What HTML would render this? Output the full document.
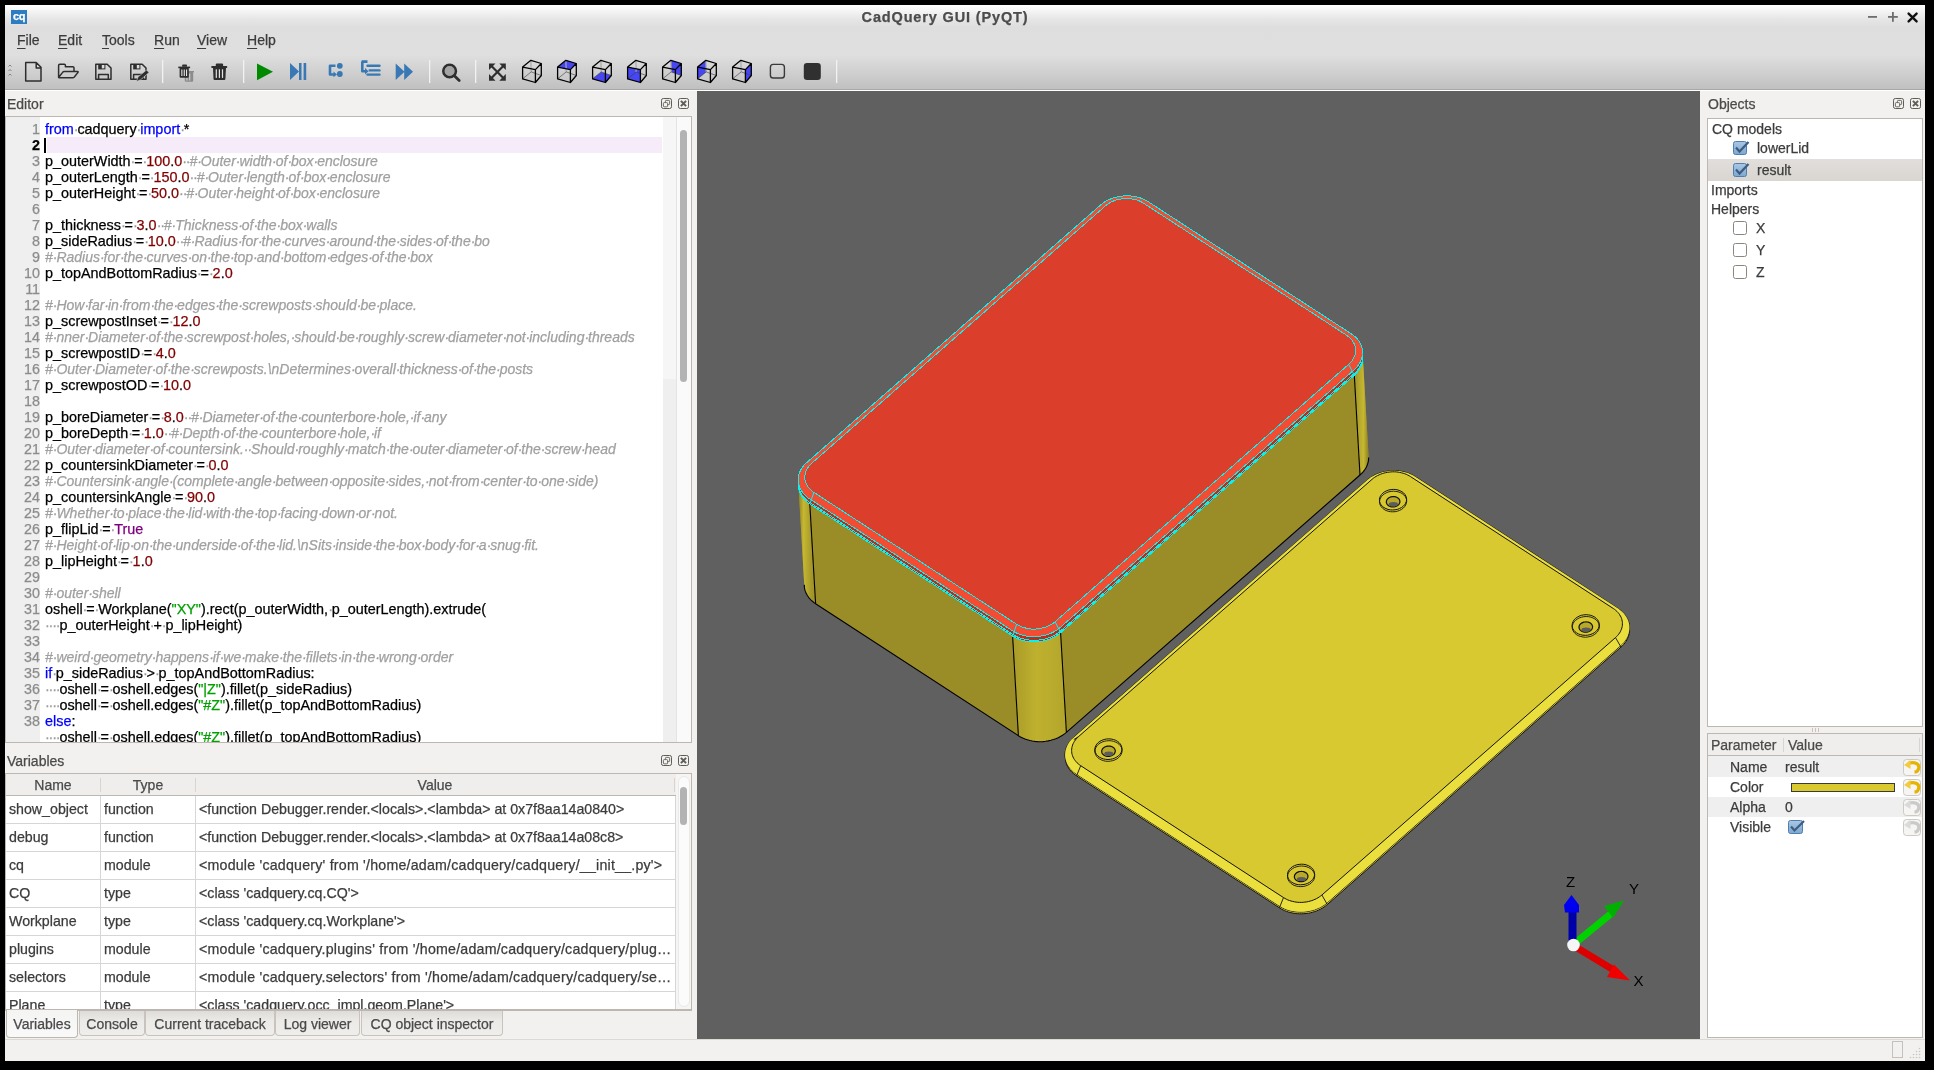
<!DOCTYPE html>
<html><head><meta charset="utf-8">
<style>
*{margin:0;padding:0;box-sizing:border-box}
html,body{width:1934px;height:1070px;overflow:hidden;background:#000}
body{position:relative;will-change:transform;-webkit-text-stroke:0.25px currentColor;font-family:"Liberation Sans",sans-serif;font-size:14px;color:#3c3c3c}
.a{position:absolute}
.t{position:absolute;white-space:pre;line-height:16px}
#win{position:absolute;left:5px;top:5px;width:1920px;height:1056px;background:#f0efed;overflow:hidden}
#hdr{position:absolute;left:0;top:0;width:1920px;height:85px;
 background:linear-gradient(#ffffff 0px,#e6e6e6 14px,#dedede 22px,#dfdfdf 50px,#cdcdcd 70px,#c0c0c0 84px)}
.menu{position:absolute;top:32px;font-size:14px;color:#3c3c3c;line-height:16px}
.menu u{text-decoration:underline;text-underline-offset:2.5px;text-decoration-thickness:1px}
.sep{position:absolute;top:55px;width:1px;height:23px;background:#f4f4f4;border-left:1px solid #c4c4c4}
.ico{position:absolute;top:53px}
.dtitle{position:absolute;font-size:14px;color:#4a4a4a;line-height:16px}
.dbtn{position:absolute;width:11px;height:11px;border:1px solid #6e6e6e;border-radius:2px}
.ln{position:absolute;left:5px;width:34px;text-align:right;white-space:pre;font-size:14.3px;line-height:16px;color:#8c8c8c}
.ln.cur{color:#000;font-weight:bold}
.code{position:absolute;left:44px;white-space:pre;font-size:14.4px;line-height:16px;color:#000}
.code .k{color:#0000ff}.code .d{color:#800000}.code .dt{color:#000;font-weight:normal}.code .s{color:#00a000}.code .p{color:#800080}
.code .c{color:#a0a0a0;font-style:italic;font-size:14px}
.code b.w{font-weight:normal;color:#9a9a9a;display:inline-block;width:3.6px;text-align:center;overflow:visible}
.hd{position:absolute;top:3px;text-align:center;font-size:14px;line-height:16px;color:#4a4a4a}
.vr{position:absolute;white-space:pre;font-size:14.2px;line-height:26px;height:27px;color:#3c3c3c}
.tab{position:absolute;text-align:center;font-size:14px;line-height:27px;color:#4a4a4a;border:1px solid #c8c4bd;border-top:none;border-radius:0 0 4px 4px;background:linear-gradient(#dedcd8,#eceae7 40%,#efeeec)}
.tab.act{background:linear-gradient(#f4f4f3,#f9f9f9);line-height:28px;border-color:#bcb8b1}
.tr{position:absolute;white-space:pre;font-size:14px;line-height:16px;color:#3c3c3c}
</style></head><body>
<div class="a" style="left:5px;top:5px;width:1920px;height:1056px;background:#f2f1ef"></div>
<div class="a" id="hdr" style="left:5px;top:5px;width:1920px;height:84px;background:linear-gradient(#ffffff 0px,#e6e6e6 14px,#dedede 22px,#dfdfdf 50px,#cdcdcd 70px,#c0c0c0 84px)"></div>
<div class="a" style="left:11px;top:10px;width:16px;height:14px;background:#2d7dc0;color:#fff;font-weight:bold;font-size:11px;line-height:12px;text-align:center;letter-spacing:-0.3px">cq</div>
<div class="a" style="left:5px;top:8px;width:1880px;text-align:center;font-weight:bold;font-size:14.5px;letter-spacing:0.85px;color:#4c4c4c;line-height:18px">CadQuery GUI (PyQT)</div>
<svg class="a" style="left:1860px;top:8px" width="64" height="20" viewBox="1860 8 64 20">
<rect x="1868" y="16" width="9" height="1.8" fill="#6e6e6e"/><rect x="1888" y="16" width="9.8" height="1.8" fill="#6e6e6e"/><rect x="1892" y="12" width="1.8" height="9.8" fill="#6e6e6e"/>
<path d="M1908.6,13.6 L1916.6,21.4 M1916.6,13.6 L1908.6,21.4" stroke="#111" stroke-width="2.4" stroke-linecap="round"/>
</svg>
<div class="menu" style="left:17px"><u>F</u>ile</div>
<div class="menu" style="left:58px"><u>E</u>dit</div>
<div class="menu" style="left:102px"><u>T</u>ools</div>
<div class="menu" style="left:154px"><u>R</u>un</div>
<div class="menu" style="left:197px"><u>V</u>iew</div>
<div class="menu" style="left:247px"><u>H</u>elp</div>
<svg class="a" style="left:0;top:0" width="1934" height="100" viewBox="0 0 1934 100">
<g fill="none" stroke="#7a7a7a" stroke-width="0.9"><path d="M8.5,66.5 L10,65 L11.5,66.5 M8.5,71 L10,69.5 L11.5,71 M8.5,75.5 L10,74 L11.5,75.5"/></g>
<g fill="none" stroke="#2e2e2e" stroke-width="1.5" stroke-linejoin="round">
<path d="M25.7,62.5 H36.2 L41,67.3 V81 H25.7 Z M36.2,62.5 V68 H41"/>
<path d="M58.6,77.5 V65.4 Q58.6,64.2 59.8,64.2 H64.3 Q65.4,64.2 65.4,65.3 V66.7 H72.8 Q74,66.7 74,67.9 V71.2 M58.6,77.5 L62.6,72.4 Q63.2,71.5 64.3,71.5 H77.6 Q78.5,71.5 78,72.4 L74.3,77 Q73.6,77.8 72.6,77.8 H59.5 Q58.6,77.8 58.6,77.5"/>
<path d="M95.8,64.2 H107.2 L111,68.1 V79.3 H95.8 Z M98.6,79.3 V74.5 H108.3 V79.3"/>
<path d="M130.8,64.2 H142.2 L146,68.1 V79.3 H130.8 Z M133.6,79.3 V74.5 H143.3 V79.3"/>
</g>
<rect x="98.2" y="64" width="7.2" height="5.4" fill="#2e2e2e"/><rect x="101.8" y="65" width="2.6" height="3.4" fill="#dcdcdc"/>
<rect x="133.2" y="64" width="7.2" height="5.4" fill="#2e2e2e"/><rect x="136.8" y="65" width="2.6" height="3.4" fill="#dcdcdc"/>
<path d="M136.5,81.5 L138,77 L146.5,70 L149,72.5 L140.5,79.8 Z" fill="#2e2e2e" stroke="#d0d0d0" stroke-width="0.6"/>
<rect x="162" y="60" width="1.3" height="23" fill="#f2f2f2"/>
<!-- small trash + ghost -->
<g fill="#8c8c8c"><rect x="184" y="71" width="10" height="1.5"/><rect x="184.8" y="72" width="8.4" height="9.7" rx="1"/></g>
<rect x="186.3" y="73.5" width="1.3" height="7" fill="#c8c8c8"/><rect x="189" y="73.5" width="1.3" height="7" fill="#c8c8c8"/>
<g fill="#2e2e2e"><rect x="178.3" y="66.6" width="11.8" height="1.6"/><path d="M182.2,66.8 V65.3 Q182.2,64.6 183,64.6 H186.2 Q187,64.6 187,65.3 V66.8 Z"/><rect x="179.6" y="67.8" width="9.2" height="10" rx="1"/></g>
<g fill="#e8e8e8"><rect x="181.3" y="69.5" width="1.1" height="6.5"/><rect x="183.7" y="69.5" width="1.1" height="6.5"/><rect x="186" y="69.5" width="1.1" height="6.5"/></g>
<!-- trash -->
<g fill="#2e2e2e"><rect x="211.3" y="66" width="15.9" height="1.9" rx="0.6"/><path d="M215.8,66.2 V64.4 Q215.8,63.4 216.8,63.4 H222.1 Q223.1,63.4 223.1,64.4 V66.2 Z"/><path d="M213,67.6 H226 L225.4,79 Q225.3,80 224.3,80 H214.6 Q213.6,80 213.5,79 Z"/></g>
<g fill="#e4e4e4"><rect x="215.7" y="69.3" width="1.2" height="8.6"/><rect x="218.8" y="69.3" width="1.2" height="8.6"/><rect x="221.9" y="69.3" width="1.2" height="8.6"/></g>
<rect x="243" y="60" width="1.3" height="23" fill="#f2f2f2"/>
<!-- run -->
<path d="M257,63.4 L273,71.8 L257,80.2 Z" fill="#008a00"/>
<path d="M290,63 L299,71.5 L290,80 Z" fill="#3878b4"/><rect x="299" y="63" width="2.5" height="17" fill="#3878b4"/><rect x="303.6" y="63" width="2.6" height="17" fill="#3878b4"/>
<g stroke="#3878b4" stroke-width="2.6" fill="none" stroke-linejoin="round"><path d="M335.5,65.8 H330 V74.5 H334"/><path d="M361.6,61.6 H367.5 M362.3,61.6 V71.2 H365.5"/></g>
<path d="M333.5,71.6 L337,74.5 L333.5,77.3 Z" fill="#3878b4"/><circle cx="339.8" cy="65.8" r="2.9" fill="#3878b4"/><circle cx="339.8" cy="74" r="2.9" fill="#3878b4"/>
<path d="M365,68 L368.5,71.2 L365,74.4 Z" fill="#3878b4"/>
<g stroke="#3878b4" stroke-width="2.4" stroke-linecap="round"><path d="M367.5,65.8 H379.5 M369.7,70.4 H379.5 M367.5,74.6 H379.5"/></g>
<path d="M395.7,63.4 L404.5,71.7 L395.7,80 Z M404.2,63.4 L413,71.7 L404.2,80 Z" fill="#3878b4"/>
<rect x="429" y="60" width="1.3" height="23" fill="#f2f2f2"/>
<!-- magnifier -->
<circle cx="449.6" cy="71" r="5" fill="#a4a4a4"/>
<circle cx="449.6" cy="71" r="6.3" fill="none" stroke="#2e2e2e" stroke-width="2.6"/>
<path d="M454.6,76 L459.2,80.6" stroke="#2e2e2e" stroke-width="2.8" stroke-linecap="round"/>
<rect x="475" y="60" width="1.3" height="23" fill="#f2f2f2"/>
<!-- fit -->
<g stroke="#2e2e2e" stroke-width="2.2"><path d="M491,65.5 L503.8,78.5 M503.8,65.5 L491,78.5"/></g>
<g fill="#2e2e2e"><path d="M489,63.4 H495.5 L489,70 Z"/><path d="M505.8,63.4 H499.3 L505.8,70 Z"/><path d="M489,80.7 H495.5 L489,74 Z"/><path d="M505.8,80.7 H499.3 L505.8,74 Z"/></g>
<path d="M530.9,60.3 L531.2,71.9" stroke="#a8a8a8" stroke-width="1.2" fill="none"/><path d="M522.6,78.8 L531.2,71.9 L541.3,75.5" stroke="#3a3a3a" stroke-width="0.6" fill="none"/><path d="M530.9,60.3 L522.6,67.1 L535.4,69.6 L541.3,63.5 Z M522.6,67.1 L522.6,78.8 L535.4,82.5 L541.3,75.5 L541.3,63.5 M535.4,69.6 L535.4,82.5" stroke="#000" stroke-width="1.3" fill="none" stroke-linejoin="round"/>
<polygon points="565.9,60.3 576.3,63.5 570.4,69.6 557.6,67.1" fill="#4646f2"/><path d="M565.9,60.3 L566.2,71.9" stroke="#a8a8a8" stroke-width="1.2" fill="none"/><path d="M557.6,78.8 L566.2,71.9 L576.3,75.5" stroke="#3a3a3a" stroke-width="0.6" fill="none"/><path d="M565.9,60.3 L557.6,67.1 L570.4,69.6 L576.3,63.5 Z M557.6,67.1 L557.6,78.8 L570.4,82.5 L576.3,75.5 L576.3,63.5 M570.4,69.6 L570.4,82.5" stroke="#000" stroke-width="1.3" fill="none" stroke-linejoin="round"/>
<polygon points="601.2,71.9 611.3,75.5 605.4,82.5 592.6,78.8" fill="#4646f2"/><path d="M600.9,60.3 L601.2,71.9" stroke="#a8a8a8" stroke-width="1.2" fill="none"/><path d="M592.6,78.8 L601.2,71.9 L611.3,75.5" stroke="#3a3a3a" stroke-width="0.6" fill="none"/><path d="M600.9,60.3 L592.6,67.1 L605.4,69.6 L611.3,63.5 Z M592.6,67.1 L592.6,78.8 L605.4,82.5 L611.3,75.5 L611.3,63.5 M605.4,69.6 L605.4,82.5" stroke="#000" stroke-width="1.3" fill="none" stroke-linejoin="round"/>
<polygon points="627.6,67.1 640.4,69.6 640.4,82.5 627.6,78.8" fill="#4646f2"/><path d="M635.9,60.3 L636.2,71.9" stroke="#a8a8a8" stroke-width="1.2" fill="none"/><path d="M627.6,78.8 L636.2,71.9 L646.3,75.5" stroke="#3a3a3a" stroke-width="0.6" fill="none"/><path d="M635.9,60.3 L627.6,67.1 L640.4,69.6 L646.3,63.5 Z M627.6,67.1 L627.6,78.8 L640.4,82.5 L646.3,75.5 L646.3,63.5 M640.4,69.6 L640.4,82.5" stroke="#000" stroke-width="1.3" fill="none" stroke-linejoin="round"/>
<polygon points="670.9,60.3 681.3,63.5 681.3,75.5 671.2,71.9" fill="#4646f2"/><path d="M670.9,60.3 L671.2,71.9" stroke="#a8a8a8" stroke-width="1.2" fill="none"/><path d="M662.6,78.8 L671.2,71.9 L681.3,75.5" stroke="#3a3a3a" stroke-width="0.6" fill="none"/><path d="M670.9,60.3 L662.6,67.1 L675.4,69.6 L681.3,63.5 Z M662.6,67.1 L662.6,78.8 L675.4,82.5 L681.3,75.5 L681.3,63.5 M675.4,69.6 L675.4,82.5" stroke="#000" stroke-width="1.3" fill="none" stroke-linejoin="round"/>
<polygon points="705.9,60.3 697.6,67.1 697.6,78.8 706.2,71.9" fill="#4646f2"/><path d="M705.9,60.3 L706.2,71.9" stroke="#a8a8a8" stroke-width="1.2" fill="none"/><path d="M697.6,78.8 L706.2,71.9 L716.3,75.5" stroke="#3a3a3a" stroke-width="0.6" fill="none"/><path d="M705.9,60.3 L697.6,67.1 L710.4,69.6 L716.3,63.5 Z M697.6,67.1 L697.6,78.8 L710.4,82.5 L716.3,75.5 L716.3,63.5 M710.4,69.6 L710.4,82.5" stroke="#000" stroke-width="1.3" fill="none" stroke-linejoin="round"/>
<polygon points="745.4,69.6 751.3,63.5 751.3,75.5 745.4,82.5" fill="#4646f2"/><path d="M740.9,60.3 L741.2,71.9" stroke="#a8a8a8" stroke-width="1.2" fill="none"/><path d="M732.6,78.8 L741.2,71.9 L751.3,75.5" stroke="#3a3a3a" stroke-width="0.6" fill="none"/><path d="M740.9,60.3 L732.6,67.1 L745.4,69.6 L751.3,63.5 Z M732.6,67.1 L732.6,78.8 L745.4,82.5 L751.3,75.5 L751.3,63.5 M745.4,69.6 L745.4,82.5" stroke="#000" stroke-width="1.3" fill="none" stroke-linejoin="round"/>
<rect x="770.4" y="64.4" width="14" height="13.6" rx="2.8" fill="none" stroke="#3a3a3a" stroke-width="1.4"/>
<rect x="803.8" y="62.9" width="17" height="17.1" rx="3.2" fill="#303030"/>
<rect x="836" y="60" width="1.3" height="23" fill="#f2f2f2"/>
</svg>

<div class="a" style="left:5px;top:89px;width:1920px;height:1px;background:#a8a8a8"></div>
<div class="a" style="left:5px;top:90px;width:1920px;height:1px;background:#ffffff"></div>
<!-- editor dock -->
<div class="dtitle" style="left:7px;top:96px">Editor</div>
<svg class="a" style="left:655px;top:92px" width="40" height="20" viewBox="655 92 40 20"><rect x="661.5" y="98.5" width="10" height="10" rx="1.8" fill="none" stroke="#5f5d58" stroke-width="1"/><rect x="665.4" y="100.4" width="4.2" height="4.2" rx="0.8" fill="none" stroke="#5f5d58" stroke-width="0.9"/><rect x="663.4" y="102.6" width="4.2" height="4.2" rx="0.8" fill="#f6f5f3" stroke="#5f5d58" stroke-width="0.9"/><rect x="678.5" y="98.5" width="10" height="10" rx="1.8" fill="none" stroke="#5f5d58" stroke-width="1"/><path d="M680.9,100.9 L686.1,106.1 M686.1,100.9 L680.9,106.1" stroke="#5f5d58" stroke-width="2"/></svg>
<div class="a" id="ed" style="left:5px;top:116px;width:687px;height:627px;border:1px solid #bcb8b1;background:#fff;overflow:hidden">
 <div class="a" style="left:0;top:0;width:34px;height:627px;background:#efefef"></div>
 <div class="a" style="left:41px;top:20px;width:615px;height:16px;background:#f6ebf8"></div>
 <div class="a" style="left:38px;top:21px;width:2px;height:15px;background:#000"></div>
 <div class="a" style="left:657px;top:0;width:13px;height:262px;background:#f6f6f6"></div>
 <div class="a" style="left:657px;top:262px;width:13px;height:365px;background:#efefef"></div>
 <div class="a" style="left:670px;top:0;width:1px;height:627px;background:#e4e4e4"></div>
 <div class="a" style="left:671px;top:0;width:14px;height:627px;background:#fafafa"></div>
 <div class="a" style="left:674px;top:13px;width:7px;height:252px;background:#b3b3b3;border-radius:4px"></div>
 <div class="a" style="left:-5px;top:-116px">
<div class="ln" style="top:120px">1</div>
<div class="code" style="top:120px"><span class="k">from</span><b class="w">·</b>cadquery<b class="w">·</b><span class="k">import</span><b class="w">·</b>*</div>
<div class="ln cur" style="top:136px">2</div>
<div class="ln" style="top:152px">3</div>
<div class="code" style="top:152px">p_outerWidth<b class="w">·</b>=<b class="w">·</b><span class="d">100<b class="dt">.</b>0</span><b class="w">·</b><b class="w">·</b><span class="c">#<b class="w">·</b>Outer<b class="w">·</b>width<b class="w">·</b>of<b class="w">·</b>box<b class="w">·</b>enclosure</span></div>
<div class="ln" style="top:168px">4</div>
<div class="code" style="top:168px">p_outerLength<b class="w">·</b>=<b class="w">·</b><span class="d">150<b class="dt">.</b>0</span><b class="w">·</b><b class="w">·</b><span class="c">#<b class="w">·</b>Outer<b class="w">·</b>length<b class="w">·</b>of<b class="w">·</b>box<b class="w">·</b>enclosure</span></div>
<div class="ln" style="top:184px">5</div>
<div class="code" style="top:184px">p_outerHeight<b class="w">·</b>=<b class="w">·</b><span class="d">50<b class="dt">.</b>0</span><b class="w">·</b><b class="w">·</b><span class="c">#<b class="w">·</b>Outer<b class="w">·</b>height<b class="w">·</b>of<b class="w">·</b>box<b class="w">·</b>enclosure</span></div>
<div class="ln" style="top:200px">6</div>
<div class="ln" style="top:216px">7</div>
<div class="code" style="top:216px">p_thickness<b class="w">·</b>=<b class="w">·</b><span class="d">3<b class="dt">.</b>0</span><b class="w">·</b><b class="w">·</b><span class="c">#<b class="w">·</b>Thickness<b class="w">·</b>of<b class="w">·</b>the<b class="w">·</b>box<b class="w">·</b>walls</span></div>
<div class="ln" style="top:232px">8</div>
<div class="code" style="top:232px">p_sideRadius<b class="w">·</b>=<b class="w">·</b><span class="d">10<b class="dt">.</b>0</span><b class="w">·</b><b class="w">·</b><span class="c">#<b class="w">·</b>Radius<b class="w">·</b>for<b class="w">·</b>the<b class="w">·</b>curves<b class="w">·</b>around<b class="w">·</b>the<b class="w">·</b>sides<b class="w">·</b>of<b class="w">·</b>the<b class="w">·</b>bo</span></div>
<div class="ln" style="top:248px">9</div>
<div class="code" style="top:248px"><span class="c">#<b class="w">·</b>Radius<b class="w">·</b>for<b class="w">·</b>the<b class="w">·</b>curves<b class="w">·</b>on<b class="w">·</b>the<b class="w">·</b>top<b class="w">·</b>and<b class="w">·</b>bottom<b class="w">·</b>edges<b class="w">·</b>of<b class="w">·</b>the<b class="w">·</b>box</span></div>
<div class="ln" style="top:264px">10</div>
<div class="code" style="top:264px">p_topAndBottomRadius<b class="w">·</b>=<b class="w">·</b><span class="d">2<b class="dt">.</b>0</span></div>
<div class="ln" style="top:280px">11</div>
<div class="ln" style="top:296px">12</div>
<div class="code" style="top:296px"><span class="c">#<b class="w">·</b>How<b class="w">·</b>far<b class="w">·</b>in<b class="w">·</b>from<b class="w">·</b>the<b class="w">·</b>edges<b class="w">·</b>the<b class="w">·</b>screwposts<b class="w">·</b>should<b class="w">·</b>be<b class="w">·</b>place.</span></div>
<div class="ln" style="top:312px">13</div>
<div class="code" style="top:312px">p_screwpostInset<b class="w">·</b>=<b class="w">·</b><span class="d">12<b class="dt">.</b>0</span></div>
<div class="ln" style="top:328px">14</div>
<div class="code" style="top:328px"><span class="c">#<b class="w">·</b>nner<b class="w">·</b>Diameter<b class="w">·</b>of<b class="w">·</b>the<b class="w">·</b>screwpost<b class="w">·</b>holes,<b class="w">·</b>should<b class="w">·</b>be<b class="w">·</b>roughly<b class="w">·</b>screw<b class="w">·</b>diameter<b class="w">·</b>not<b class="w">·</b>including<b class="w">·</b>threads</span></div>
<div class="ln" style="top:344px">15</div>
<div class="code" style="top:344px">p_screwpostID<b class="w">·</b>=<b class="w">·</b><span class="d">4<b class="dt">.</b>0</span></div>
<div class="ln" style="top:360px">16</div>
<div class="code" style="top:360px"><span class="c">#<b class="w">·</b>Outer<b class="w">·</b>Diameter<b class="w">·</b>of<b class="w">·</b>the<b class="w">·</b>screwposts.\nDetermines<b class="w">·</b>overall<b class="w">·</b>thickness<b class="w">·</b>of<b class="w">·</b>the<b class="w">·</b>posts</span></div>
<div class="ln" style="top:376px">17</div>
<div class="code" style="top:376px">p_screwpostOD<b class="w">·</b>=<b class="w">·</b><span class="d">10<b class="dt">.</b>0</span></div>
<div class="ln" style="top:392px">18</div>
<div class="ln" style="top:408px">19</div>
<div class="code" style="top:408px">p_boreDiameter<b class="w">·</b>=<b class="w">·</b><span class="d">8<b class="dt">.</b>0</span><b class="w">·</b><b class="w">·</b><span class="c">#<b class="w">·</b>Diameter<b class="w">·</b>of<b class="w">·</b>the<b class="w">·</b>counterbore<b class="w">·</b>hole,<b class="w">·</b>if<b class="w">·</b>any</span></div>
<div class="ln" style="top:424px">20</div>
<div class="code" style="top:424px">p_boreDepth<b class="w">·</b>=<b class="w">·</b><span class="d">1<b class="dt">.</b>0</span><b class="w">·</b><b class="w">·</b><span class="c">#<b class="w">·</b>Depth<b class="w">·</b>of<b class="w">·</b>the<b class="w">·</b>counterbore<b class="w">·</b>hole,<b class="w">·</b>if</span></div>
<div class="ln" style="top:440px">21</div>
<div class="code" style="top:440px"><span class="c">#<b class="w">·</b>Outer<b class="w">·</b>diameter<b class="w">·</b>of<b class="w">·</b>countersink.<b class="w">·</b><b class="w">·</b>Should<b class="w">·</b>roughly<b class="w">·</b>match<b class="w">·</b>the<b class="w">·</b>outer<b class="w">·</b>diameter<b class="w">·</b>of<b class="w">·</b>the<b class="w">·</b>screw<b class="w">·</b>head</span></div>
<div class="ln" style="top:456px">22</div>
<div class="code" style="top:456px">p_countersinkDiameter<b class="w">·</b>=<b class="w">·</b><span class="d">0<b class="dt">.</b>0</span></div>
<div class="ln" style="top:472px">23</div>
<div class="code" style="top:472px"><span class="c">#<b class="w">·</b>Countersink<b class="w">·</b>angle<b class="w">·</b>(complete<b class="w">·</b>angle<b class="w">·</b>between<b class="w">·</b>opposite<b class="w">·</b>sides,<b class="w">·</b>not<b class="w">·</b>from<b class="w">·</b>center<b class="w">·</b>to<b class="w">·</b>one<b class="w">·</b>side)</span></div>
<div class="ln" style="top:488px">24</div>
<div class="code" style="top:488px">p_countersinkAngle<b class="w">·</b>=<b class="w">·</b><span class="d">90<b class="dt">.</b>0</span></div>
<div class="ln" style="top:504px">25</div>
<div class="code" style="top:504px"><span class="c">#<b class="w">·</b>Whether<b class="w">·</b>to<b class="w">·</b>place<b class="w">·</b>the<b class="w">·</b>lid<b class="w">·</b>with<b class="w">·</b>the<b class="w">·</b>top<b class="w">·</b>facing<b class="w">·</b>down<b class="w">·</b>or<b class="w">·</b>not.</span></div>
<div class="ln" style="top:520px">26</div>
<div class="code" style="top:520px">p_flipLid<b class="w">·</b>=<b class="w">·</b><span class="p">True</span></div>
<div class="ln" style="top:536px">27</div>
<div class="code" style="top:536px"><span class="c">#<b class="w">·</b>Height<b class="w">·</b>of<b class="w">·</b>lip<b class="w">·</b>on<b class="w">·</b>the<b class="w">·</b>underside<b class="w">·</b>of<b class="w">·</b>the<b class="w">·</b>lid.\nSits<b class="w">·</b>inside<b class="w">·</b>the<b class="w">·</b>box<b class="w">·</b>body<b class="w">·</b>for<b class="w">·</b>a<b class="w">·</b>snug<b class="w">·</b>fit.</span></div>
<div class="ln" style="top:552px">28</div>
<div class="code" style="top:552px">p_lipHeight<b class="w">·</b>=<b class="w">·</b><span class="d">1<b class="dt">.</b>0</span></div>
<div class="ln" style="top:568px">29</div>
<div class="ln" style="top:584px">30</div>
<div class="code" style="top:584px"><span class="c">#<b class="w">·</b>outer<b class="w">·</b>shell</span></div>
<div class="ln" style="top:600px">31</div>
<div class="code" style="top:600px">oshell<b class="w">·</b>=<b class="w">·</b>Workplane(<span class="s">&quot;XY&quot;</span>).rect(p_outerWidth,<b class="w">·</b>p_outerLength).extrude(</div>
<div class="ln" style="top:616px">32</div>
<div class="code" style="top:616px"><b class="w">·</b><b class="w">·</b><b class="w">·</b><b class="w">·</b>p_outerHeight<b class="w">·</b>+<b class="w">·</b>p_lipHeight)</div>
<div class="ln" style="top:632px">33</div>
<div class="ln" style="top:648px">34</div>
<div class="code" style="top:648px"><span class="c">#<b class="w">·</b>weird<b class="w">·</b>geometry<b class="w">·</b>happens<b class="w">·</b>if<b class="w">·</b>we<b class="w">·</b>make<b class="w">·</b>the<b class="w">·</b>fillets<b class="w">·</b>in<b class="w">·</b>the<b class="w">·</b>wrong<b class="w">·</b>order</span></div>
<div class="ln" style="top:664px">35</div>
<div class="code" style="top:664px"><span class="k">if</span><b class="w">·</b>p_sideRadius<b class="w">·</b>&gt;<b class="w">·</b>p_topAndBottomRadius:</div>
<div class="ln" style="top:680px">36</div>
<div class="code" style="top:680px"><b class="w">·</b><b class="w">·</b><b class="w">·</b><b class="w">·</b>oshell<b class="w">·</b>=<b class="w">·</b>oshell.edges(<span class="s">&quot;|Z&quot;</span>).fillet(p_sideRadius)</div>
<div class="ln" style="top:696px">37</div>
<div class="code" style="top:696px"><b class="w">·</b><b class="w">·</b><b class="w">·</b><b class="w">·</b>oshell<b class="w">·</b>=<b class="w">·</b>oshell.edges(<span class="s">&quot;#Z&quot;</span>).fillet(p_topAndBottomRadius)</div>
<div class="ln" style="top:712px">38</div>
<div class="code" style="top:712px"><span class="k">else</span>:</div>

<div class="code" style="top:728px"><b class="w">·</b><b class="w">·</b><b class="w">·</b><b class="w">·</b>oshell<b class="w">·</b>=<b class="w">·</b>oshell.edges(<span class="s">&quot;#Z&quot;</span>).fillet(p_topAndBottomRadius)</div>
 </div>
</div>

<div class="dtitle" style="left:7px;top:753px">Variables</div>
<svg class="a" style="left:655px;top:750px" width="40" height="20" viewBox="655 750 40 20"><rect x="661.5" y="755.5" width="10" height="10" rx="1.8" fill="none" stroke="#5f5d58" stroke-width="1"/><rect x="665.4" y="757.4" width="4.2" height="4.2" rx="0.8" fill="none" stroke="#5f5d58" stroke-width="0.9"/><rect x="663.4" y="759.6" width="4.2" height="4.2" rx="0.8" fill="#f6f5f3" stroke="#5f5d58" stroke-width="0.9"/><rect x="678.5" y="755.5" width="10" height="10" rx="1.8" fill="none" stroke="#5f5d58" stroke-width="1"/><path d="M680.9,757.9 L686.1,763.1 M686.1,757.9 L680.9,763.1" stroke="#5f5d58" stroke-width="2"/></svg>
<div class="a" style="left:5px;top:773px;width:687px;height:237px;border:1px solid #bcb8b1;background:#fff;overflow:hidden">
 <div class="a" style="left:0;top:0;width:670px;height:22px;background:#efeeec;border-bottom:1px solid #bcb8b1"></div>
 <div class="a" style="left:94px;top:4px;width:1px;height:14px;background:#d8d5cf"></div>
 <div class="a" style="left:189px;top:4px;width:1px;height:14px;background:#d8d5cf"></div>
 <div class="a" style="left:668px;top:4px;width:1px;height:14px;background:#d8d5cf"></div>
 <div class="hd" style="left:0;width:94px">Name</div><div class="hd" style="left:95px;width:94px">Type</div><div class="hd" style="left:190px;width:478px">Value</div>
 <div class="a" style="left:0;top:49px;width:670px;height:1px;background:#d6d6d6"></div>
 <div class="vr" style="left:3px;top:22px">show_object</div><div class="vr" style="left:98px;top:22px">function</div><div class="vr" style="left:193px;top:22px">&lt;function Debugger.render.&lt;locals&gt;.&lt;lambda&gt; at 0x7f8aa14a0840&gt;</div>
 <div class="a" style="left:0;top:77px;width:670px;height:1px;background:#d6d6d6"></div>
 <div class="vr" style="left:3px;top:50px">debug</div><div class="vr" style="left:98px;top:50px">function</div><div class="vr" style="left:193px;top:50px">&lt;function Debugger.render.&lt;locals&gt;.&lt;lambda&gt; at 0x7f8aa14a08c8&gt;</div>
 <div class="a" style="left:0;top:105px;width:670px;height:1px;background:#d6d6d6"></div>
 <div class="vr" style="left:3px;top:78px">cq</div><div class="vr" style="left:98px;top:78px">module</div><div class="vr" style="left:193px;top:78px;letter-spacing:0.22px">&lt;module &#x27;cadquery&#x27; from &#x27;/home/adam/cadquery/cadquery/__init__.py&#x27;&gt;</div>
 <div class="a" style="left:0;top:133px;width:670px;height:1px;background:#d6d6d6"></div>
 <div class="vr" style="left:3px;top:106px">CQ</div><div class="vr" style="left:98px;top:106px">type</div><div class="vr" style="left:193px;top:106px">&lt;class &#x27;cadquery.cq.CQ&#x27;&gt;</div>
 <div class="a" style="left:0;top:161px;width:670px;height:1px;background:#d6d6d6"></div>
 <div class="vr" style="left:3px;top:134px">Workplane</div><div class="vr" style="left:98px;top:134px">type</div><div class="vr" style="left:193px;top:134px">&lt;class &#x27;cadquery.cq.Workplane&#x27;&gt;</div>
 <div class="a" style="left:0;top:189px;width:670px;height:1px;background:#d6d6d6"></div>
 <div class="vr" style="left:3px;top:162px">plugins</div><div class="vr" style="left:98px;top:162px">module</div><div class="vr" style="left:193px;top:162px;letter-spacing:0.22px">&lt;module &#x27;cadquery.plugins&#x27; from &#x27;/home/adam/cadquery/cadquery/plug…</div>
 <div class="a" style="left:0;top:217px;width:670px;height:1px;background:#d6d6d6"></div>
 <div class="vr" style="left:3px;top:190px">selectors</div><div class="vr" style="left:98px;top:190px">module</div><div class="vr" style="left:193px;top:190px;letter-spacing:0.22px">&lt;module &#x27;cadquery.selectors&#x27; from &#x27;/home/adam/cadquery/cadquery/se…</div>
 <div class="a" style="left:0;top:245px;width:670px;height:1px;background:#d6d6d6"></div>
 <div class="vr" style="left:3px;top:218px">Plane</div><div class="vr" style="left:98px;top:218px">type</div><div class="vr" style="left:193px;top:218px">&lt;class &#x27;cadquery.occ_impl.geom.Plane&#x27;&gt;</div>
 <div class="a" style="left:94px;top:22px;width:1px;height:215px;background:#d6d6d6"></div>
 <div class="a" style="left:189px;top:22px;width:1px;height:215px;background:#d6d6d6"></div>
 <div class="a" style="left:669px;top:22px;width:1px;height:215px;background:#d6d6d6"></div>
 <div class="a" style="left:670px;top:0;width:15px;height:237px;background:#f6f5f3"></div>
 <div class="a" style="left:672px;top:2px;width:12px;height:231px;background:#fbfbfb;border:1px solid #ebe9e5;border-radius:6px"></div>
 <div class="a" style="left:674px;top:13px;width:7px;height:38px;background:#b3b3b3;border-radius:4px"></div>
</div>
<div class="a" style="left:5px;top:1010px;width:687px;height:1px;background:#bcb8b1"></div>
<div class="tab act" style="left:6px;width:72px;top:1010px;height:28px">Variables</div>
<div class="tab" style="left:79px;width:66px;top:1011px;height:25px">Console</div>
<div class="tab" style="left:145px;width:130px;top:1011px;height:25px">Current traceback</div>
<div class="tab" style="left:275px;width:85px;top:1011px;height:25px">Log viewer</div>
<div class="tab" style="left:361px;width:142px;top:1011px;height:25px">CQ object inspector</div>
<!-- viewport -->
<div class="a" id="vp" style="left:697px;top:91px;width:1003px;height:948px;background:#606060"></div>
<svg class="a" style="left:697px;top:91px" width="1003" height="948" viewBox="697 91 1003 948">
<defs>
 <linearGradient id="gB" x1="1012" y1="0" x2="1067" y2="0" gradientUnits="userSpaceOnUse"><stop offset="0" stop-color="#a89a28"/><stop offset="0.45" stop-color="#bfb12e"/><stop offset="1" stop-color="#b3a52b"/></linearGradient>
 <linearGradient id="gL" x1="798" y1="0" x2="812" y2="0" gradientUnits="userSpaceOnUse"><stop offset="0" stop-color="#8a7d20"/><stop offset="0.4" stop-color="#c6b830"/><stop offset="1" stop-color="#a3952a"/></linearGradient>
 <linearGradient id="gR" x1="1355" y1="0" x2="1369" y2="0" gradientUnits="userSpaceOnUse"><stop offset="0" stop-color="#a3952a"/><stop offset="0.6" stop-color="#c6b830"/><stop offset="1" stop-color="#8a7d20"/></linearGradient>
</defs>
<path d="M798.5,484.9 L798.6,483.2 L798.8,481.5 L799.2,479.9 L799.7,478.2 L800.4,476.6 L801.2,475.0 L802.1,473.4 L803.2,471.9 L804.4,470.5 L805.7,469.1 L807.1,467.8 L1100.8,210.3 L1102.3,209.1 L1103.9,207.9 L1105.7,206.8 L1107.5,205.8 L1109.4,204.9 L1111.3,204.0 L1113.4,203.3 L1115.5,202.7 L1117.6,202.1 L1119.8,201.7 L1121.9,201.4 L1124.2,201.2 L1126.4,201.1 L1128.6,201.1 L1130.8,201.2 L1133.0,201.4 L1135.2,201.8 L1137.3,202.2 L1139.3,202.8 L1141.4,203.4 L1143.3,204.2 L1145.2,205.1 L1147.0,206.0 L1148.7,207.0 L1351.5,339.0 L1353.1,340.1 L1354.6,341.3 L1356.0,342.6 L1357.3,343.9 L1358.5,345.3 L1359.5,346.8 L1360.4,348.3 L1361.2,349.9 L1361.8,351.5 L1362.3,353.1 L1362.6,354.8 L1362.8,356.4 L1368.6,456.1 L1368.7,457.8 L1368.6,459.5 L1368.3,461.2 L1367.9,462.9 L1367.4,464.5 L1366.8,466.1 L1366.0,467.7 L1365.0,469.3 L1364.0,470.8 L1362.8,472.3 L1361.5,473.6 L1360.0,475.0 L1066.4,732.4 L1064.8,733.6 L1063.2,734.8 L1061.5,735.9 L1059.7,736.9 L1057.8,737.9 L1055.8,738.7 L1053.8,739.4 L1051.7,740.1 L1049.5,740.6 L1047.4,741.0 L1045.2,741.3 L1043.0,741.5 L1040.8,741.6 L1038.5,741.6 L1036.3,741.5 L1034.1,741.3 L1032.0,740.9 L1029.8,740.5 L1027.8,739.9 L1025.8,739.3 L1023.8,738.5 L1021.9,737.7 L1020.1,736.7 L1018.4,735.7 L815.6,603.8 L814.0,602.6 L812.5,601.5 L811.1,600.2 L809.8,598.8 L808.7,597.4 L807.6,596.0 L806.8,594.4 L806.0,592.9 L805.4,591.3 L804.9,589.6 L804.5,588.0 L804.3,586.3 L798.5,486.6 Z" fill="#9a8c26"/>
<path d="M1060.6,632.7 L1058.7,634.2 L1056.7,635.5 L1054.6,636.8 L1052.4,638.0 L1050.0,639.0 L1047.6,639.8 L1045.0,640.6 L1042.5,641.1 L1039.8,641.6 L1037.2,641.8 L1034.5,641.9 L1031.9,641.9 L1029.2,641.7 L1026.6,641.3 L1024.1,640.8 L1021.6,640.1 L1019.2,639.3 L1016.9,638.3 L1014.7,637.2 L1012.6,636.0 L1018.4,735.7 L1020.5,736.9 L1022.7,738.0 L1025.0,739.0 L1027.4,739.8 L1029.9,740.5 L1032.4,741.0 L1035.0,741.4 L1037.6,741.6 L1040.3,741.7 L1043.0,741.6 L1045.6,741.3 L1048.3,740.9 L1050.8,740.3 L1053.4,739.6 L1055.8,738.7 L1058.2,737.7 L1060.4,736.5 L1062.5,735.3 L1064.5,733.9 L1066.4,732.4 Z" fill="url(#gB)"/>
<path d="M809.8,504.0 L808.8,503.3 L807.8,502.6 L806.8,501.8 L805.9,501.0 L805.0,500.2 L804.2,499.3 L803.5,498.4 L802.7,497.5 L802.1,496.5 L801.5,495.6 L800.9,494.6 L800.4,493.6 L799.9,492.6 L799.6,491.5 L799.2,490.5 L799.0,489.4 L798.8,488.3 L798.6,487.3 L798.5,486.2 L798.5,485.1 L804.3,584.8 L804.3,585.9 L804.4,587.0 L804.5,588.1 L804.7,589.1 L805.0,590.2 L805.3,591.2 L805.7,592.3 L806.2,593.3 L806.7,594.3 L807.2,595.3 L807.9,596.3 L808.5,597.2 L809.2,598.1 L810.0,599.0 L810.8,599.9 L811.7,600.7 L812.6,601.5 L813.6,602.3 L814.6,603.1 L815.6,603.8 Z" fill="url(#gL)"/>
<path d="M1362.9,357.9 L1362.8,358.8 L1362.8,359.8 L1362.7,360.7 L1362.5,361.6 L1362.3,362.6 L1362.1,363.5 L1361.8,364.4 L1361.4,365.3 L1361.1,366.2 L1360.6,367.1 L1360.2,368.0 L1359.7,368.9 L1359.1,369.7 L1358.5,370.6 L1357.9,371.4 L1357.3,372.2 L1356.6,373.0 L1355.8,373.8 L1355.1,374.5 L1354.3,375.3 L1360.0,475.0 L1360.8,474.2 L1361.6,473.5 L1362.4,472.7 L1363.1,471.9 L1363.7,471.1 L1364.3,470.3 L1364.9,469.5 L1365.5,468.6 L1366.0,467.7 L1366.4,466.9 L1366.8,466.0 L1367.2,465.1 L1367.6,464.1 L1367.8,463.2 L1368.1,462.3 L1368.3,461.4 L1368.4,460.4 L1368.6,459.5 L1368.6,458.6 L1368.6,457.6 Z" fill="url(#gR)"/>
<path d="M804.3,584.8 L804.3,585.9 L804.4,587.0 L804.5,588.1 L804.7,589.1 L805.0,590.2 L805.3,591.2 L805.7,592.3 L806.2,593.3 L806.7,594.3 L807.2,595.3 L807.9,596.3 L808.5,597.2 L809.2,598.1 L810.0,599.0 L810.8,599.9 L811.7,600.7 L812.6,601.5 L813.6,602.3 L814.6,603.1 L815.6,603.8 L1018.4,735.7 L1020.5,736.9 L1022.7,738.0 L1025.0,739.0 L1027.4,739.8 L1029.9,740.5 L1032.4,741.0 L1035.0,741.4 L1037.6,741.6 L1040.3,741.7 L1043.0,741.6 L1045.6,741.3 L1048.3,740.9 L1050.8,740.3 L1053.4,739.6 L1055.8,738.7 L1058.2,737.7 L1060.4,736.5 L1062.5,735.3 L1064.5,733.9 L1066.4,732.4 L1360.0,475.0 L1360.8,474.2 L1361.6,473.5 L1362.4,472.7 L1363.1,471.9 L1363.7,471.1 L1364.3,470.3 L1364.9,469.5 L1365.5,468.6 L1366.0,467.7 L1366.4,466.9 L1366.8,466.0 L1367.2,465.1 L1367.6,464.1 L1367.8,463.2 L1368.1,462.3 L1368.3,461.4 L1368.4,460.4 L1368.6,459.5 L1368.6,458.6 L1368.6,457.6" fill="none" stroke="#000" stroke-width="1.1"/>
<path d="M809.8,504.0 L815.6,603.8" stroke="#000" stroke-width="1.1"/>
<path d="M1012.6,636.0 L1018.4,735.7" stroke="#000" stroke-width="1.1"/>
<path d="M1060.6,632.7 L1066.4,732.4" stroke="#000" stroke-width="1.1"/>
<path d="M1354.3,375.3 L1360.0,475.0" stroke="#000" stroke-width="1.1"/>
<path d="M1100.8,210.4 L1102.3,209.1 L1103.9,207.9 L1105.7,206.8 L1107.5,205.8 L1109.4,204.9 L1111.3,204.0 L1113.4,203.3 L1115.4,202.7 L1117.6,202.1 L1119.7,201.7 L1121.9,201.4 L1124.2,201.2 L1126.4,201.1 L1128.6,201.1 L1130.8,201.2 L1133.0,201.5 L1135.2,201.8 L1137.3,202.2 L1139.3,202.8 L1141.4,203.4 L1143.3,204.2 L1145.2,205.1 L1147.0,206.0 L1148.7,207.0 L1351.5,339.0 L1353.1,340.1 L1354.6,341.3 L1356.0,342.6 L1357.3,343.9 L1358.4,345.3 L1359.5,346.8 L1360.4,348.3 L1361.1,349.9 L1361.8,351.5 L1362.3,353.1 L1362.6,354.7 L1362.8,356.4 L1362.9,358.1 L1362.8,359.8 L1362.5,361.5 L1362.2,363.1 L1361.6,364.8 L1361.0,366.4 L1360.2,368.0 L1359.2,369.6 L1358.2,371.1 L1357.0,372.5 L1355.7,373.9 L1354.3,375.3 L1060.6,632.7 L1059.1,633.9 L1057.4,635.1 L1055.7,636.2 L1053.9,637.2 L1052.0,638.1 L1050.0,639.0 L1048.0,639.7 L1045.9,640.3 L1043.8,640.9 L1041.6,641.3 L1039.4,641.6 L1037.2,641.8 L1035.0,641.9 L1032.7,641.9 L1030.5,641.8 L1028.3,641.6 L1026.2,641.2 L1024.1,640.8 L1022.0,640.2 L1020.0,639.6 L1018.0,638.8 L1016.1,637.9 L1014.4,637.0 L1012.6,636.0 L809.8,504.0 L808.2,502.9 L806.7,501.7 L805.3,500.4 L804.1,499.1 L802.9,497.7 L801.9,496.2 L801.0,494.7 L800.2,493.1 L799.6,491.5 L799.1,489.9 L798.7,488.3 L798.5,486.6 L798.5,484.9 L798.6,483.2 L798.8,481.5 L799.2,479.9 L799.7,478.2 L800.4,476.6 L801.2,475.0 L802.1,473.4 L803.2,471.9 L804.4,470.5 L805.7,469.1 L807.1,467.8 Z" fill="#c42a18"/>
<path d="M1100.8,210.4 L1102.3,209.1 L1103.9,207.9 L1105.7,206.8 L1107.5,205.8 L1109.4,204.9 L1111.3,204.0 L1113.4,203.3 L1115.4,202.7 L1117.6,202.1 L1119.7,201.7 L1121.9,201.4 L1124.2,201.2 L1126.4,201.1 L1128.6,201.1 L1130.8,201.2 L1133.0,201.5 L1135.2,201.8 L1137.3,202.2 L1139.3,202.8 L1141.4,203.4 L1143.3,204.2 L1145.2,205.1 L1147.0,206.0 L1148.7,207.0 L1351.5,339.0 L1353.1,340.1 L1354.6,341.3 L1356.0,342.6 L1357.3,343.9 L1358.4,345.3 L1359.5,346.8 L1360.4,348.3 L1361.1,349.9 L1361.8,351.5 L1362.3,353.1 L1362.6,354.7 L1362.8,356.4 L1362.9,358.1 L1362.8,359.8 L1362.5,361.5 L1362.2,363.1 L1361.6,364.8 L1361.0,366.4 L1360.2,368.0 L1359.2,369.6 L1358.2,371.1 L1357.0,372.5 L1355.7,373.9 L1354.3,375.3 L1060.6,632.7 L1059.1,633.9 L1057.4,635.1 L1055.7,636.2 L1053.9,637.2 L1052.0,638.1 L1050.0,639.0 L1048.0,639.7 L1045.9,640.3 L1043.8,640.9 L1041.6,641.3 L1039.4,641.6 L1037.2,641.8 L1035.0,641.9 L1032.7,641.9 L1030.5,641.8 L1028.3,641.6 L1026.2,641.2 L1024.1,640.8 L1022.0,640.2 L1020.0,639.6 L1018.0,638.8 L1016.1,637.9 L1014.4,637.0 L1012.6,636.0 L809.8,504.0 L808.2,502.9 L806.7,501.7 L805.3,500.4 L804.1,499.1 L802.9,497.7 L801.9,496.2 L801.0,494.7 L800.2,493.1 L799.6,491.5 L799.1,489.9 L798.7,488.3 L798.5,486.6 L798.5,484.9 L798.6,483.2 L798.8,481.5 L799.2,479.9 L799.7,478.2 L800.4,476.6 L801.2,475.0 L802.1,473.4 L803.2,471.9 L804.4,470.5 L805.7,469.1 L807.1,467.8 Z" fill="none" stroke="#00f4f4" stroke-width="1" shape-rendering="crispEdges"/>
<path d="M1100.7,208.7 L1102.2,207.5 L1103.8,206.3 L1105.6,205.2 L1107.4,204.2 L1109.3,203.2 L1111.2,202.4 L1113.3,201.7 L1115.4,201.0 L1117.5,200.5 L1119.7,200.1 L1121.8,199.8 L1124.1,199.6 L1126.3,199.5 L1128.5,199.5 L1130.7,199.6 L1132.9,199.8 L1135.1,200.2 L1137.2,200.6 L1139.3,201.2 L1141.3,201.8 L1143.2,202.6 L1145.1,203.4 L1146.9,204.4 L1148.6,205.4 L1351.4,337.3 L1353.0,338.5 L1354.5,339.7 L1355.9,340.9 L1357.2,342.3 L1358.4,343.7 L1359.4,345.2 L1360.3,346.7 L1361.1,348.2 L1361.7,349.8 L1362.2,351.5 L1362.5,353.1 L1362.7,354.8 L1362.8,356.5 L1362.7,358.2 L1362.4,359.9 L1362.1,361.5 L1361.5,363.2 L1360.9,364.8 L1360.1,366.4 L1359.1,367.9 L1358.1,369.5 L1356.9,370.9 L1355.6,372.3 L1354.2,373.6 L1060.5,631.0 L1059.0,632.3 L1057.3,633.5 L1055.6,634.6 L1053.8,635.6 L1051.9,636.5 L1049.9,637.4 L1047.9,638.1 L1045.8,638.7 L1043.7,639.3 L1041.5,639.7 L1039.3,640.0 L1037.1,640.2 L1034.9,640.3 L1032.7,640.3 L1030.4,640.2 L1028.3,639.9 L1026.1,639.6 L1024.0,639.1 L1021.9,638.6 L1019.9,637.9 L1017.9,637.2 L1016.1,636.3 L1014.3,635.4 L1012.6,634.3 L809.8,502.4 L808.1,501.3 L806.6,500.1 L805.2,498.8 L804.0,497.5 L802.8,496.1 L801.8,494.6 L800.9,493.1 L800.1,491.5 L799.5,489.9 L799.0,488.3 L798.6,486.6 L798.4,485.0 L798.4,483.3 L798.5,481.6 L798.7,479.9 L799.1,478.2 L799.6,476.6 L800.3,475.0 L801.1,473.4 L802.0,471.8 L803.1,470.3 L804.3,468.9 L805.6,467.5 L807.0,466.1 Z" fill="none" stroke="#00f4f4" stroke-width="1" shape-rendering="crispEdges"/>
<path d="M1100.5,205.1 L1102.0,203.8 L1103.6,202.6 L1105.3,201.5 L1107.2,200.5 L1109.1,199.6 L1111.0,198.8 L1113.1,198.0 L1115.1,197.4 L1117.3,196.9 L1119.4,196.4 L1121.6,196.1 L1123.8,195.9 L1126.1,195.8 L1128.3,195.8 L1130.5,195.9 L1132.7,196.2 L1134.8,196.5 L1137.0,197.0 L1139.0,197.5 L1141.1,198.2 L1143.0,198.9 L1144.9,199.8 L1146.7,200.7 L1148.4,201.8 L1351.2,333.7 L1352.8,334.8 L1354.3,336.0 L1355.7,337.3 L1357.0,338.6 L1358.1,340.0 L1359.2,341.5 L1360.1,343.0 L1360.8,344.6 L1361.5,346.2 L1362.0,347.8 L1362.3,349.5 L1362.5,351.2 L1362.6,352.8 L1362.5,354.5 L1362.2,356.2 L1361.8,357.9 L1361.3,359.5 L1360.7,361.2 L1359.9,362.7 L1358.9,364.3 L1357.9,365.8 L1356.7,367.3 L1355.4,368.7 L1354.0,370.0 L1060.3,627.4 L1058.7,628.6 L1057.1,629.8 L1055.4,630.9 L1053.6,631.9 L1051.7,632.9 L1049.7,633.7 L1047.7,634.4 L1045.6,635.1 L1043.5,635.6 L1041.3,636.0 L1039.1,636.3 L1036.9,636.6 L1034.7,636.7 L1032.4,636.6 L1030.2,636.5 L1028.0,636.3 L1025.9,635.9 L1023.8,635.5 L1021.7,634.9 L1019.7,634.3 L1017.7,633.5 L1015.8,632.7 L1014.0,631.7 L1012.3,630.7 L809.5,498.8 L807.9,497.7 L806.4,496.5 L805.0,495.2 L803.7,493.8 L802.6,492.4 L801.6,491.0 L800.7,489.4 L799.9,487.9 L799.3,486.3 L798.8,484.6 L798.4,483.0 L798.2,481.3 L798.2,479.6 L798.3,477.9 L798.5,476.3 L798.9,474.6 L799.4,472.9 L800.1,471.3 L800.9,469.7 L801.8,468.2 L802.9,466.7 L804.0,465.2 L805.4,463.8 L806.8,462.5 Z" fill="#f44c32"/>
<path d="M1100.5,205.1 L1102.0,203.8 L1103.6,202.6 L1105.3,201.5 L1107.2,200.5 L1109.1,199.6 L1111.0,198.8 L1113.1,198.0 L1115.1,197.4 L1117.3,196.9 L1119.4,196.4 L1121.6,196.1 L1123.8,195.9 L1126.1,195.8 L1128.3,195.8 L1130.5,195.9 L1132.7,196.2 L1134.8,196.5 L1137.0,197.0 L1139.0,197.5 L1141.1,198.2 L1143.0,198.9 L1144.9,199.8 L1146.7,200.7 L1148.4,201.8 L1351.2,333.7 L1352.8,334.8 L1354.3,336.0 L1355.7,337.3 L1357.0,338.6 L1358.1,340.0 L1359.2,341.5 L1360.1,343.0 L1360.8,344.6 L1361.5,346.2 L1362.0,347.8 L1362.3,349.5 L1362.5,351.2 L1362.6,352.8 L1362.5,354.5 L1362.2,356.2 L1361.8,357.9 L1361.3,359.5 L1360.7,361.2 L1359.9,362.7 L1358.9,364.3 L1357.9,365.8 L1356.7,367.3 L1355.4,368.7 L1354.0,370.0 L1060.3,627.4 L1058.7,628.6 L1057.1,629.8 L1055.4,630.9 L1053.6,631.9 L1051.7,632.9 L1049.7,633.7 L1047.7,634.4 L1045.6,635.1 L1043.5,635.6 L1041.3,636.0 L1039.1,636.3 L1036.9,636.6 L1034.7,636.7 L1032.4,636.6 L1030.2,636.5 L1028.0,636.3 L1025.9,635.9 L1023.8,635.5 L1021.7,634.9 L1019.7,634.3 L1017.7,633.5 L1015.8,632.7 L1014.0,631.7 L1012.3,630.7 L809.5,498.8 L807.9,497.7 L806.4,496.5 L805.0,495.2 L803.7,493.8 L802.6,492.4 L801.6,491.0 L800.7,489.4 L799.9,487.9 L799.3,486.3 L798.8,484.6 L798.4,483.0 L798.2,481.3 L798.2,479.6 L798.3,477.9 L798.5,476.3 L798.9,474.6 L799.4,472.9 L800.1,471.3 L800.9,469.7 L801.8,468.2 L802.9,466.7 L804.0,465.2 L805.4,463.8 L806.8,462.5 Z" fill="none" stroke="#00f4f4" stroke-width="1" shape-rendering="crispEdges"/>
<path d="M1105.4,205.9 L1106.6,204.9 L1107.9,204.0 L1109.3,203.1 L1110.7,202.3 L1112.3,201.6 L1113.8,200.9 L1115.5,200.3 L1117.1,199.8 L1118.8,199.4 L1120.6,199.0 L1122.3,198.8 L1124.1,198.6 L1125.9,198.5 L1127.7,198.5 L1129.4,198.6 L1131.2,198.8 L1132.9,199.1 L1134.6,199.5 L1136.3,199.9 L1137.9,200.4 L1139.4,201.0 L1140.9,201.7 L1142.4,202.5 L1143.7,203.3 L1346.5,335.2 L1347.8,336.1 L1349.0,337.1 L1350.1,338.1 L1351.2,339.2 L1352.1,340.3 L1352.9,341.5 L1353.6,342.7 L1354.3,343.9 L1354.8,345.2 L1355.1,346.5 L1355.4,347.8 L1355.6,349.2 L1355.6,350.5 L1355.6,351.9 L1355.4,353.2 L1355.1,354.6 L1354.6,355.9 L1354.1,357.2 L1353.5,358.5 L1352.7,359.7 L1351.9,360.9 L1350.9,362.1 L1349.9,363.2 L1348.7,364.3 L1055.1,621.7 L1053.8,622.7 L1052.5,623.6 L1051.2,624.5 L1049.7,625.3 L1048.2,626.0 L1046.6,626.7 L1045.0,627.3 L1043.3,627.8 L1041.6,628.2 L1039.9,628.6 L1038.1,628.8 L1036.4,629.0 L1034.6,629.1 L1032.8,629.1 L1031.0,629.0 L1029.3,628.8 L1027.6,628.5 L1025.9,628.1 L1024.2,627.7 L1022.6,627.2 L1021.0,626.6 L1019.5,625.9 L1018.1,625.1 L1016.7,624.3 L813.9,492.4 L812.6,491.5 L811.4,490.5 L810.3,489.5 L809.3,488.4 L808.4,487.3 L807.5,486.1 L806.8,484.9 L806.2,483.7 L805.7,482.4 L805.3,481.1 L805.0,479.8 L804.9,478.4 L804.8,477.1 L804.9,475.7 L805.1,474.4 L805.4,473.0 L805.8,471.7 L806.3,470.4 L807.0,469.1 L807.7,467.9 L808.6,466.7 L809.5,465.5 L810.6,464.4 L811.7,463.3 Z" fill="#db3e2b" stroke="#00f4f4" stroke-width="1" shape-rendering="crispEdges"/>
<path d="M811.7,463.3 L807.1,467.8" stroke="#00f4f4" stroke-width="1"/>
<path d="M813.9,492.4 L809.8,504.0" stroke="#00f4f4" stroke-width="1"/>
<path d="M1016.7,624.3 L1012.6,636.0" stroke="#00f4f4" stroke-width="1"/>
<path d="M1055.1,621.7 L1060.6,632.7" stroke="#00f4f4" stroke-width="1"/>
<path d="M1348.7,364.3 L1354.3,375.3" stroke="#00f4f4" stroke-width="1"/>
<path d="M1065.1,754.5 L1065.2,752.9 L1065.4,751.2 L1065.8,749.5 L1066.3,747.9 L1067.0,746.2 L1067.8,744.6 L1068.7,743.1 L1069.8,741.6 L1070.9,740.1 L1072.2,738.7 L1073.7,737.4 L1367.3,480.0 L1368.9,478.7 L1370.5,477.6 L1372.2,476.5 L1374.1,475.4 L1376.0,474.5 L1377.9,473.7 L1380.0,472.9 L1382.0,472.3 L1384.2,471.8 L1386.3,471.4 L1388.5,471.0 L1390.7,470.8 L1393.0,470.7 L1395.2,470.8 L1397.4,470.9 L1399.6,471.1 L1401.7,471.4 L1403.9,471.9 L1405.9,472.4 L1408.0,473.1 L1409.9,473.9 L1411.8,474.7 L1413.6,475.7 L1415.3,476.7 L1618.1,608.6 L1619.7,609.7 L1621.2,610.9 L1622.6,612.2 L1623.9,613.6 L1625.0,615.0 L1626.1,616.4 L1627.0,618.0 L1627.7,619.5 L1628.4,621.1 L1628.8,622.7 L1629.2,624.4 L1629.4,626.1 L1629.5,628.3 L1629.6,630.0 L1629.5,631.7 L1629.2,633.4 L1628.9,635.0 L1628.3,636.7 L1627.7,638.3 L1626.9,639.9 L1626.0,641.5 L1624.9,643.0 L1623.7,644.4 L1622.4,645.8 L1621.0,647.1 L1327.3,904.5 L1325.8,905.8 L1324.1,907.0 L1322.4,908.1 L1320.6,909.1 L1318.7,910.0 L1316.7,910.9 L1314.7,911.6 L1312.6,912.2 L1310.5,912.8 L1308.3,913.2 L1306.1,913.5 L1303.9,913.7 L1301.7,913.8 L1299.5,913.8 L1297.3,913.7 L1295.1,913.4 L1292.9,913.1 L1290.8,912.6 L1288.7,912.1 L1286.7,911.4 L1284.7,910.7 L1282.9,909.8 L1281.1,908.9 L1279.4,907.8 L1076.6,775.9 L1075.0,774.8 L1073.5,773.6 L1072.0,772.3 L1070.8,771.0 L1069.6,769.6 L1068.6,768.1 L1067.7,766.6 L1066.9,765.0 L1066.3,763.4 L1065.8,761.8 L1065.5,760.1 L1065.3,758.5 L1065.1,756.2 Z" fill="#e6d838" stroke="#111" stroke-width="1"/>
<path d="M1367.4,480.6 L1368.9,479.4 L1370.5,478.2 L1372.3,477.1 L1374.1,476.0 L1376.0,475.1 L1378.0,474.3 L1380.0,473.6 L1382.1,472.9 L1384.2,472.4 L1386.4,472.0 L1388.6,471.6 L1390.8,471.4 L1393.0,471.3 L1395.2,471.4 L1397.4,471.5 L1399.6,471.7 L1401.8,472.1 L1403.9,472.5 L1406.0,473.1 L1408.0,473.7 L1409.9,474.5 L1411.8,475.3 L1413.6,476.3 L1415.3,477.3 L1618.1,609.2 L1619.7,610.3 L1621.2,611.5 L1622.6,612.8 L1623.9,614.2 L1625.1,615.6 L1626.1,617.0 L1627.0,618.6 L1627.8,620.1 L1628.4,621.7 L1628.9,623.4 L1629.2,625.0 L1629.4,626.7 L1629.5,628.4 L1629.4,630.1 L1629.2,631.7 L1628.8,633.4 L1628.3,635.1 L1627.6,636.7 L1626.8,638.3 L1625.9,639.8 L1624.8,641.3 L1623.6,642.8 L1622.3,644.2 L1620.9,645.5 L1327.2,902.9 L1325.7,904.2 L1324.0,905.4 L1322.3,906.5 L1320.5,907.5 L1318.6,908.4 L1316.6,909.2 L1314.6,910.0 L1312.5,910.6 L1310.4,911.1 L1308.2,911.6 L1306.0,911.9 L1303.8,912.1 L1301.6,912.2 L1299.4,912.2 L1297.2,912.0 L1295.0,911.8 L1292.8,911.5 L1290.7,911.0 L1288.6,910.5 L1286.6,909.8 L1284.7,909.1 L1282.8,908.2 L1281.0,907.3 L1279.3,906.2 L1076.5,774.3 L1074.9,773.2 L1073.4,772.0 L1072.0,770.7 L1070.7,769.4 L1069.5,768.0 L1068.5,766.5 L1067.6,765.0 L1066.8,763.4 L1066.2,761.8 L1065.7,760.2 L1065.4,758.5 L1065.2,756.8 L1065.1,755.2 L1065.2,753.5 L1065.4,751.8 L1065.8,750.1 L1066.3,748.5 L1067.0,746.8 L1067.8,745.3 L1068.7,743.7 L1069.8,742.2 L1071.0,740.7 L1072.3,739.3 L1073.7,738.0 Z" fill="none" stroke="#222" stroke-width="0.9"/>
<path d="M1367.3,480.0 L1368.9,478.7 L1370.5,477.6 L1372.2,476.5 L1374.1,475.4 L1376.0,474.5 L1377.9,473.7 L1380.0,472.9 L1382.0,472.3 L1384.2,471.8 L1386.3,471.4 L1388.5,471.0 L1390.7,470.8 L1393.0,470.7 L1395.2,470.7 L1397.4,470.9 L1399.6,471.1 L1401.7,471.4 L1403.9,471.9 L1405.9,472.4 L1408.0,473.1 L1409.9,473.9 L1411.8,474.7 L1413.6,475.7 L1415.3,476.7 L1618.1,608.6 L1619.7,609.7 L1621.2,610.9 L1622.6,612.2 L1623.9,613.6 L1625.0,615.0 L1626.1,616.4 L1627.0,617.9 L1627.7,619.5 L1628.4,621.1 L1628.8,622.7 L1629.2,624.4 L1629.4,626.1 L1629.4,627.8 L1629.4,629.4 L1629.1,631.1 L1628.7,632.8 L1628.2,634.4 L1627.6,636.1 L1626.8,637.7 L1625.8,639.2 L1624.8,640.7 L1623.6,642.2 L1622.3,643.6 L1620.8,644.9 L1327.2,902.3 L1325.6,903.6 L1324.0,904.7 L1322.3,905.8 L1320.5,906.9 L1318.6,907.8 L1316.6,908.6 L1314.6,909.4 L1312.5,910.0 L1310.4,910.5 L1308.2,910.9 L1306.0,911.3 L1303.8,911.5 L1301.6,911.6 L1299.3,911.6 L1297.1,911.4 L1294.9,911.2 L1292.8,910.9 L1290.7,910.4 L1288.6,909.9 L1286.6,909.2 L1284.6,908.5 L1282.7,907.6 L1280.9,906.7 L1279.2,905.6 L1076.4,773.7 L1074.8,772.6 L1073.3,771.4 L1071.9,770.1 L1070.6,768.8 L1069.5,767.3 L1068.5,765.9 L1067.6,764.4 L1066.8,762.8 L1066.2,761.2 L1065.7,759.6 L1065.3,757.9 L1065.1,756.2 L1065.1,754.6 L1065.2,752.9 L1065.4,751.2 L1065.8,749.5 L1066.3,747.9 L1067.0,746.2 L1067.8,744.6 L1068.7,743.1 L1069.8,741.6 L1070.9,740.1 L1072.3,738.7 L1073.7,737.4 Z" fill="#ebdf3e"/>
<path d="M1372.2,479.2 L1373.4,478.2 L1374.7,477.3 L1376.1,476.4 L1377.5,475.6 L1379.1,474.9 L1380.6,474.2 L1382.3,473.6 L1383.9,473.1 L1385.6,472.7 L1387.4,472.3 L1389.1,472.1 L1390.9,471.9 L1392.7,471.8 L1394.5,471.8 L1396.2,471.9 L1398.0,472.1 L1399.7,472.4 L1401.4,472.8 L1403.1,473.2 L1404.7,473.7 L1406.2,474.3 L1407.7,475.0 L1409.2,475.8 L1410.5,476.6 L1613.3,608.5 L1614.6,609.4 L1615.8,610.4 L1616.9,611.4 L1618.0,612.5 L1618.9,613.6 L1619.7,614.8 L1620.4,616.0 L1621.1,617.2 L1621.6,618.5 L1621.9,619.8 L1622.2,621.1 L1622.4,622.5 L1622.4,623.8 L1622.4,625.2 L1622.2,626.5 L1621.9,627.9 L1621.4,629.2 L1620.9,630.5 L1620.3,631.8 L1619.5,633.0 L1618.7,634.2 L1617.7,635.4 L1616.7,636.5 L1615.5,637.6 L1321.9,895.0 L1320.6,896.0 L1319.3,896.9 L1318.0,897.8 L1316.5,898.6 L1315.0,899.3 L1313.4,900.0 L1311.8,900.6 L1310.1,901.1 L1308.4,901.5 L1306.7,901.9 L1304.9,902.1 L1303.2,902.3 L1301.4,902.4 L1299.6,902.4 L1297.8,902.3 L1296.1,902.1 L1294.4,901.8 L1292.7,901.4 L1291.0,901.0 L1289.4,900.5 L1287.8,899.9 L1286.3,899.2 L1284.9,898.4 L1283.5,897.6 L1080.7,765.7 L1079.4,764.8 L1078.2,763.8 L1077.1,762.8 L1076.1,761.7 L1075.2,760.6 L1074.3,759.4 L1073.6,758.2 L1073.0,757.0 L1072.5,755.7 L1072.1,754.4 L1071.8,753.1 L1071.7,751.7 L1071.6,750.4 L1071.7,749.0 L1071.9,747.7 L1072.2,746.3 L1072.6,745.0 L1073.1,743.7 L1073.8,742.4 L1074.5,741.2 L1075.4,740.0 L1076.3,738.8 L1077.4,737.7 L1078.5,736.6 Z" fill="#d9c930" stroke="#111" stroke-width="1"/>
<path d="M1078.5,736.6 L1073.8,739.6" stroke="#111" stroke-width="0.9"/>
<path d="M1080.7,765.7 L1076.6,775.9" stroke="#111" stroke-width="0.9"/>
<path d="M1283.5,897.6 L1279.4,907.8" stroke="#111" stroke-width="0.9"/>
<path d="M1321.9,895.0 L1327.3,904.5" stroke="#111" stroke-width="0.9"/>
<path d="M1615.5,637.6 L1621.0,647.1" stroke="#111" stroke-width="0.9"/>
<path d="M1403.2,506.3 L1401.4,507.6 L1399.4,508.6 L1397.3,509.4 L1395.0,509.8 L1392.6,510.0 L1390.3,509.9 L1388.0,509.4 L1385.9,508.6 L1384.0,507.6 L1382.4,506.4 L1381.1,504.9 L1380.1,503.3 L1379.6,501.5 L1379.4,499.7 L1379.7,497.9 L1380.4,496.2 L1381.5,494.6 L1382.9,493.1 L1384.6,491.8 L1386.6,490.8 L1388.7,490.0 L1391.1,489.6 L1393.4,489.4 L1395.8,489.5 L1398.0,490.0 L1400.1,490.8 L1402.0,491.8 L1403.7,493.0 L1405.0,494.5 L1405.9,496.1 L1406.5,497.9 L1406.6,499.7 L1406.3,501.5 L1405.6,503.2 L1404.6,504.8 L1403.2,506.3 Z" fill="none" stroke="#111" stroke-width="1"/>
<path d="M1403.3,508.1 L1401.5,509.4 L1399.6,510.4 L1397.4,511.2 L1395.1,511.7 L1392.7,511.8 L1390.4,511.7 L1388.1,511.2 L1386.0,510.5 L1384.1,509.4 L1382.5,508.2 L1381.2,506.7 L1380.2,505.1 L1379.7,503.3 L1379.5,501.6 L1379.8,499.8 L1380.5,498.0 L1381.6,496.4 L1383.0,494.9 L1384.7,493.7 L1386.7,492.6 L1388.9,491.8 L1391.2,491.4 L1393.5,491.2 L1395.9,491.4 L1398.1,491.8 L1400.3,492.6 L1402.2,493.6 L1403.8,494.9 L1405.1,496.3 L1406.0,498.0 L1406.6,499.7 L1406.7,501.5 L1406.4,503.3 L1405.7,505.0 L1404.7,506.6 L1403.3,508.1 Z" fill="none" stroke="#111" stroke-width="0.9"/>
<path d="M1398.2,505.0 L1397.3,505.7 L1396.3,506.2 L1395.3,506.6 L1394.1,506.8 L1392.9,506.9 L1391.8,506.8 L1390.6,506.6 L1389.6,506.2 L1388.6,505.7 L1387.8,505.1 L1387.2,504.3 L1386.7,503.5 L1386.4,502.6 L1386.3,501.7 L1386.5,500.8 L1386.8,500.0 L1387.4,499.2 L1388.1,498.4 L1388.9,497.8 L1389.9,497.3 L1391.0,496.9 L1392.1,496.7 L1393.3,496.6 L1394.5,496.6 L1395.6,496.9 L1396.7,497.3 L1397.6,497.8 L1398.5,498.4 L1399.1,499.1 L1399.6,499.9 L1399.8,500.8 L1399.9,501.7 L1399.8,502.6 L1399.4,503.5 L1398.9,504.3 L1398.2,505.0 Z" fill="#b8aa28" stroke="#111" stroke-width="1.2"/>
<ellipse cx="1393.4" cy="504.3" rx="4.6" ry="2.2" fill="#5c5c5c"/>
<path d="M1595.8,631.6 L1594.1,632.9 L1592.1,633.9 L1589.9,634.7 L1587.6,635.2 L1585.3,635.3 L1582.9,635.2 L1580.6,634.7 L1578.5,634.0 L1576.6,632.9 L1575.0,631.7 L1573.7,630.2 L1572.8,628.6 L1572.2,626.8 L1572.1,625.1 L1572.4,623.3 L1573.1,621.5 L1574.1,619.9 L1575.5,618.4 L1577.3,617.2 L1579.2,616.1 L1581.4,615.3 L1583.7,614.9 L1586.1,614.7 L1588.4,614.9 L1590.7,615.3 L1592.8,616.1 L1594.7,617.1 L1596.3,618.4 L1597.6,619.8 L1598.6,621.5 L1599.1,623.2 L1599.2,625.0 L1599.0,626.8 L1598.3,628.5 L1597.2,630.1 L1595.8,631.6 Z" fill="none" stroke="#111" stroke-width="1"/>
<path d="M1595.9,633.4 L1594.2,634.7 L1592.2,635.8 L1590.0,636.5 L1587.7,637.0 L1585.4,637.2 L1583.0,637.0 L1580.8,636.5 L1578.6,635.8 L1576.7,634.8 L1575.1,633.5 L1573.8,632.0 L1572.9,630.4 L1572.3,628.7 L1572.2,626.9 L1572.5,625.1 L1573.2,623.4 L1574.2,621.7 L1575.6,620.3 L1577.4,619.0 L1579.3,617.9 L1581.5,617.2 L1583.8,616.7 L1586.2,616.5 L1588.5,616.7 L1590.8,617.1 L1592.9,617.9 L1594.8,618.9 L1596.4,620.2 L1597.7,621.7 L1598.7,623.3 L1599.2,625.0 L1599.4,626.8 L1599.1,628.6 L1598.4,630.3 L1597.3,632.0 L1595.9,633.4 Z" fill="none" stroke="#111" stroke-width="0.9"/>
<path d="M1590.9,630.3 L1590.0,631.0 L1589.0,631.5 L1587.9,631.9 L1586.8,632.1 L1585.6,632.2 L1584.4,632.1 L1583.3,631.9 L1582.2,631.5 L1581.3,631.0 L1580.5,630.4 L1579.8,629.6 L1579.3,628.8 L1579.1,628.0 L1579.0,627.1 L1579.1,626.2 L1579.5,625.3 L1580.0,624.5 L1580.7,623.8 L1581.6,623.1 L1582.6,622.6 L1583.7,622.2 L1584.8,622.0 L1586.0,621.9 L1587.2,622.0 L1588.3,622.2 L1589.4,622.6 L1590.3,623.1 L1591.1,623.7 L1591.8,624.5 L1592.2,625.3 L1592.5,626.1 L1592.6,627.0 L1592.4,627.9 L1592.1,628.8 L1591.6,629.6 L1590.9,630.3 Z" fill="#b8aa28" stroke="#111" stroke-width="1.2"/>
<ellipse cx="1586.1" cy="629.6" rx="4.6" ry="2.2" fill="#5c5c5c"/>
<path d="M1118.5,755.8 L1116.8,757.0 L1114.8,758.1 L1112.6,758.9 L1110.3,759.3 L1108.0,759.5 L1105.6,759.3 L1103.4,758.9 L1101.2,758.1 L1099.3,757.1 L1097.7,755.8 L1096.4,754.4 L1095.5,752.7 L1094.9,751.0 L1094.8,749.2 L1095.1,747.4 L1095.8,745.7 L1096.8,744.1 L1098.2,742.6 L1100.0,741.3 L1101.9,740.3 L1104.1,739.5 L1106.4,739.0 L1108.8,738.9 L1111.1,739.0 L1113.4,739.5 L1115.5,740.2 L1117.4,741.3 L1119.0,742.5 L1120.3,744.0 L1121.3,745.6 L1121.8,747.4 L1122.0,749.1 L1121.7,750.9 L1121.0,752.7 L1119.9,754.3 L1118.5,755.8 Z" fill="none" stroke="#111" stroke-width="1"/>
<path d="M1118.6,757.6 L1116.9,758.9 L1114.9,759.9 L1112.7,760.7 L1110.4,761.1 L1108.1,761.3 L1105.7,761.2 L1103.5,760.7 L1101.3,759.9 L1099.4,758.9 L1097.8,757.7 L1096.5,756.2 L1095.6,754.6 L1095.0,752.8 L1094.9,751.0 L1095.2,749.2 L1095.9,747.5 L1096.9,745.9 L1098.3,744.4 L1100.1,743.1 L1102.0,742.1 L1104.2,741.3 L1106.5,740.9 L1108.9,740.7 L1111.2,740.8 L1113.5,741.3 L1115.6,742.1 L1117.5,743.1 L1119.1,744.3 L1120.4,745.8 L1121.4,747.4 L1121.9,749.2 L1122.1,751.0 L1121.8,752.8 L1121.1,754.5 L1120.0,756.1 L1118.6,757.6 Z" fill="none" stroke="#111" stroke-width="0.9"/>
<path d="M1113.6,754.5 L1112.7,755.1 L1111.7,755.7 L1110.6,756.0 L1109.5,756.3 L1108.3,756.4 L1107.1,756.3 L1106.0,756.1 L1104.9,755.7 L1104.0,755.2 L1103.2,754.5 L1102.5,753.8 L1102.0,753.0 L1101.8,752.1 L1101.7,751.2 L1101.8,750.3 L1102.2,749.5 L1102.7,748.6 L1103.4,747.9 L1104.3,747.3 L1105.3,746.8 L1106.4,746.4 L1107.5,746.1 L1108.7,746.1 L1109.9,746.1 L1111.0,746.4 L1112.1,746.7 L1113.0,747.2 L1113.8,747.9 L1114.5,748.6 L1114.9,749.4 L1115.2,750.3 L1115.3,751.2 L1115.1,752.1 L1114.8,752.9 L1114.3,753.8 L1113.6,754.5 Z" fill="#b8aa28" stroke="#111" stroke-width="1.2"/>
<ellipse cx="1108.8" cy="753.8" rx="4.6" ry="2.2" fill="#5c5c5c"/>
<path d="M1311.2,881.1 L1309.5,882.4 L1307.5,883.4 L1305.3,884.2 L1303.0,884.6 L1300.6,884.8 L1298.3,884.7 L1296.0,884.2 L1293.9,883.4 L1292.0,882.4 L1290.4,881.2 L1289.1,879.7 L1288.1,878.1 L1287.6,876.3 L1287.5,874.5 L1287.7,872.7 L1288.4,871.0 L1289.5,869.4 L1290.9,867.9 L1292.6,866.6 L1294.6,865.6 L1296.8,864.8 L1299.1,864.4 L1301.4,864.2 L1303.8,864.3 L1306.1,864.8 L1308.2,865.6 L1310.1,866.6 L1311.7,867.8 L1313.0,869.3 L1313.9,870.9 L1314.5,872.7 L1314.6,874.5 L1314.3,876.3 L1313.7,878.0 L1312.6,879.6 L1311.2,881.1 Z" fill="none" stroke="#111" stroke-width="1"/>
<path d="M1311.3,882.9 L1309.6,884.2 L1307.6,885.2 L1305.4,886.0 L1303.1,886.5 L1300.7,886.6 L1298.4,886.5 L1296.1,886.0 L1294.0,885.3 L1292.1,884.2 L1290.5,883.0 L1289.2,881.5 L1288.2,879.9 L1287.7,878.2 L1287.6,876.4 L1287.8,874.6 L1288.5,872.8 L1289.6,871.2 L1291.0,869.7 L1292.7,868.5 L1294.7,867.4 L1296.9,866.7 L1299.2,866.2 L1301.5,866.0 L1303.9,866.2 L1306.2,866.6 L1308.3,867.4 L1310.2,868.4 L1311.8,869.7 L1313.1,871.1 L1314.0,872.8 L1314.6,874.5 L1314.7,876.3 L1314.4,878.1 L1313.8,879.8 L1312.7,881.4 L1311.3,882.9 Z" fill="none" stroke="#111" stroke-width="0.9"/>
<path d="M1306.2,879.8 L1305.4,880.5 L1304.4,881.0 L1303.3,881.4 L1302.1,881.6 L1301.0,881.7 L1299.8,881.6 L1298.6,881.4 L1297.6,881.0 L1296.6,880.5 L1295.8,879.9 L1295.2,879.1 L1294.7,878.3 L1294.4,877.4 L1294.4,876.5 L1294.5,875.7 L1294.8,874.8 L1295.4,874.0 L1296.1,873.2 L1296.9,872.6 L1297.9,872.1 L1299.0,871.7 L1300.2,871.5 L1301.4,871.4 L1302.5,871.5 L1303.7,871.7 L1304.7,872.1 L1305.7,872.6 L1306.5,873.2 L1307.1,873.9 L1307.6,874.7 L1307.9,875.6 L1307.9,876.5 L1307.8,877.4 L1307.5,878.3 L1306.9,879.1 L1306.2,879.8 Z" fill="#b8aa28" stroke="#111" stroke-width="1.2"/>
<ellipse cx="1301.5" cy="879.1" rx="4.6" ry="2.2" fill="#5c5c5c"/>
<!-- triad -->
<path d="M1574,944 L1613,912" stroke="#00d200" stroke-width="7"/>
<path d="M1624,900.6 L1604,906 L1613,918 Z" fill="#00b000"/>
<path d="M1574,946 L1612,969" stroke="#dd0000" stroke-width="7"/>
<path d="M1630,980.5 L1614,964.5 L1607,977 Z" fill="#f00000"/>
<path d="M1572.5,944 L1572.5,911" stroke="#0000a8" stroke-width="8"/>
<path d="M1571.5,895 L1564,905 L1565,912.5 L1579,912.5 L1579,905 Z" fill="#0000f0"/>
<circle cx="1573.5" cy="945" r="6.3" fill="#f6f6f6"/>
<text x="1566" y="887" font-family="Liberation Sans" font-size="15" fill="#000">Z</text>
<text x="1629" y="894" font-family="Liberation Sans" font-size="15" fill="#000">Y</text>
<text x="1633.5" y="986" font-family="Liberation Sans" font-size="15" fill="#000">X</text>
</svg>

<!-- right dock -->
<div class="dtitle" style="left:1708px;top:96px">Objects</div>
<svg class="a" style="left:1890px;top:92px" width="35" height="20" viewBox="1890 92 35 20"><rect x="1893.5" y="98.5" width="10" height="10" rx="1.8" fill="none" stroke="#5f5d58" stroke-width="1"/><rect x="1897.4" y="100.4" width="4.2" height="4.2" rx="0.8" fill="none" stroke="#5f5d58" stroke-width="0.9"/><rect x="1895.4" y="102.6" width="4.2" height="4.2" rx="0.8" fill="#f6f5f3" stroke="#5f5d58" stroke-width="0.9"/><rect x="1910.5" y="98.5" width="10" height="10" rx="1.8" fill="none" stroke="#5f5d58" stroke-width="1"/><path d="M1912.9,100.9 L1918.1,106.1 M1918.1,100.9 L1912.9,106.1" stroke="#5f5d58" stroke-width="2"/></svg>
<div class="a" style="left:1707px;top:118px;width:216px;height:609px;border:1px solid #bcb8b1;background:#fff;overflow:hidden">
 <div class="a" style="left:0;top:40px;width:214px;height:22px;background:linear-gradient(#e1dedb,#d9d6d2)"></div>
</div>
<div class="tr" style="left:1712px;top:121px">CQ models</div>
<div class="tr" style="left:1757px;top:140px">lowerLid</div>
<div class="tr" style="left:1757px;top:162px">result</div>
<div class="tr" style="left:1711px;top:182px">Imports</div>
<div class="tr" style="left:1711px;top:201px">Helpers</div>
<div class="tr" style="left:1756px;top:220px">X</div>
<div class="tr" style="left:1756px;top:242px">Y</div>
<div class="tr" style="left:1756px;top:264px">Z</div>
<svg class="a" style="left:1725px;top:135px" width="30" height="150" viewBox="1725 135 30 150">
 <defs><linearGradient id="cbg" x1="0" y1="0" x2="0" y2="1"><stop offset="0" stop-color="#a9c7e3"/><stop offset="1" stop-color="#7ea8d0"/></linearGradient></defs>
 <rect x="1733.5" y="141.5" width="13" height="13" rx="2" fill="url(#cbg)" stroke="#4d7fb2" stroke-width="1"/>
 <path d="M1736,147.5 L1739.5,151.5 L1748.5,142" fill="none" stroke="#3c5d80" stroke-width="2.2"/>
 <rect x="1733.5" y="163.5" width="13" height="13" rx="2" fill="url(#cbg)" stroke="#4d7fb2" stroke-width="1"/>
 <path d="M1736,169.5 L1739.5,173.5 L1748.5,164" fill="none" stroke="#3c5d80" stroke-width="2.2"/>
 <rect x="1733.5" y="221.5" width="13" height="13" rx="2" fill="#fff" stroke="#8e857c" stroke-width="1"/>
 <rect x="1733.5" y="243.5" width="13" height="13" rx="2" fill="#fff" stroke="#8e857c" stroke-width="1"/>
 <rect x="1733.5" y="265.5" width="13" height="13" rx="2" fill="#fff" stroke="#8e857c" stroke-width="1"/>
</svg>
<svg class="a" style="left:1808px;top:726px" width="15" height="8" viewBox="1808 726 15 8"><path d="M1812.5,728 V732 M1815.5,728 V732 M1818.5,728 V732" stroke="#c8c4bd" stroke-width="1"/></svg>
<div class="a" style="left:1707px;top:733px;width:216px;height:305px;border:1px solid #bcb8b1;background:#fff;overflow:hidden">
 <div class="a" style="left:0;top:0;width:214px;height:22px;background:#efeeec;border-bottom:1px solid #bcb8b1"></div>
 <div class="a" style="left:75px;top:4px;width:1px;height:14px;background:#d8d5cf"></div>
 <div class="a" style="left:211px;top:4px;width:1px;height:14px;background:#d8d5cf"></div>
 <div class="a" style="left:0;top:22px;width:214px;height:21px;background:#efefef"></div>
 <div class="a" style="left:0;top:63px;width:214px;height:20px;background:#efefef"></div>
</div>
<div class="tr" style="left:1711px;top:737px;color:#4a4a4a">Parameter</div>
<div class="tr" style="left:1788px;top:737px;color:#4a4a4a">Value</div>
<div class="tr" style="left:1730px;top:759px">Name</div><div class="tr" style="left:1785px;top:759px">result</div>
<div class="tr" style="left:1730px;top:779px">Color</div>
<div class="tr" style="left:1730px;top:799px">Alpha</div><div class="tr" style="left:1785px;top:799px">0</div>
<div class="tr" style="left:1730px;top:819px">Visible</div>
<div class="a" style="left:1791px;top:783px;width:104px;height:9px;background:#d9c92f;border:1px solid #3a3a3a"></div>
<svg class="a" style="left:1780px;top:755px" width="145" height="85" viewBox="1780 755 145 85">
 <rect x="1788.5" y="820.5" width="14" height="13" rx="2" fill="url(#cbg)" stroke="#4d7fb2" stroke-width="1"/>
 <path d="M1791,826.5 L1794.5,830.5 L1804,821" fill="none" stroke="#3c5d80" stroke-width="2.2"/>
 <g stroke="#cdc9c3" stroke-width="1" fill="#f6f5f3">
  <rect x="1903.5" y="759.5" width="17" height="16" rx="3"/><rect x="1903.5" y="779.5" width="17" height="16" rx="3"/>
  <rect x="1903.5" y="799.5" width="17" height="16" rx="3"/><rect x="1903.5" y="819.5" width="17" height="16" rx="3"/>
 </g>
<path d="M1908.5,763.3 C1914,761.5 1919.5,763.5 1918.8,768 C1918.3,771 1916.5,772 1914.5,772.2" fill="none" stroke="#e6b400" stroke-width="3.2"/><path d="M1904,765 L1910.5,760 L1910.5,769 Z" fill="#f2cc40"/><path d="M1908.5,783.3 C1914,781.5 1919.5,783.5 1918.8,788 C1918.3,791 1916.5,792 1914.5,792.2" fill="none" stroke="#e6b400" stroke-width="3.2"/><path d="M1904,785 L1910.5,780 L1910.5,789 Z" fill="#f2cc40"/><path d="M1908.5,803.3 C1914,801.5 1919.5,803.5 1918.8,808 C1918.3,811 1916.5,812 1914.5,812.2" fill="none" stroke="#cacaca" stroke-width="3.2"/><path d="M1904,805 L1910.5,800 L1910.5,809 Z" fill="#dadada"/><path d="M1908.5,823.3 C1914,821.5 1919.5,823.5 1918.8,828 C1918.3,831 1916.5,832 1914.5,832.2" fill="none" stroke="#cacaca" stroke-width="3.2"/><path d="M1904,825 L1910.5,820 L1910.5,829 Z" fill="#dadada"/></svg>
<!-- status bar -->
<div class="a" style="left:1892px;top:1041px;width:11px;height:17px;border:1px solid #c4c0ba;background:#f2f1ef"></div>
<svg class="a" style="left:1908px;top:1046px" width="14" height="13" viewBox="1908 1046 14 13">
 <g fill="#c8c5c0"><circle cx="1919.5" cy="1048.5" r="0.8"/><circle cx="1919.5" cy="1051.5" r="0.8"/><circle cx="1916.5" cy="1051.5" r="0.8"/><circle cx="1919.5" cy="1054.5" r="0.8"/><circle cx="1916.5" cy="1054.5" r="0.8"/><circle cx="1913.5" cy="1054.5" r="0.8"/><circle cx="1919.5" cy="1057.5" r="0.8"/><circle cx="1916.5" cy="1057.5" r="0.8"/><circle cx="1913.5" cy="1057.5" r="0.8"/><circle cx="1910.5" cy="1057.5" r="0.8"/></g>
</svg>

<!-- status -->
<div class="a" style="left:5px;top:1039px;width:1920px;height:1px;background:#dcdad5"></div>
</body></html>
